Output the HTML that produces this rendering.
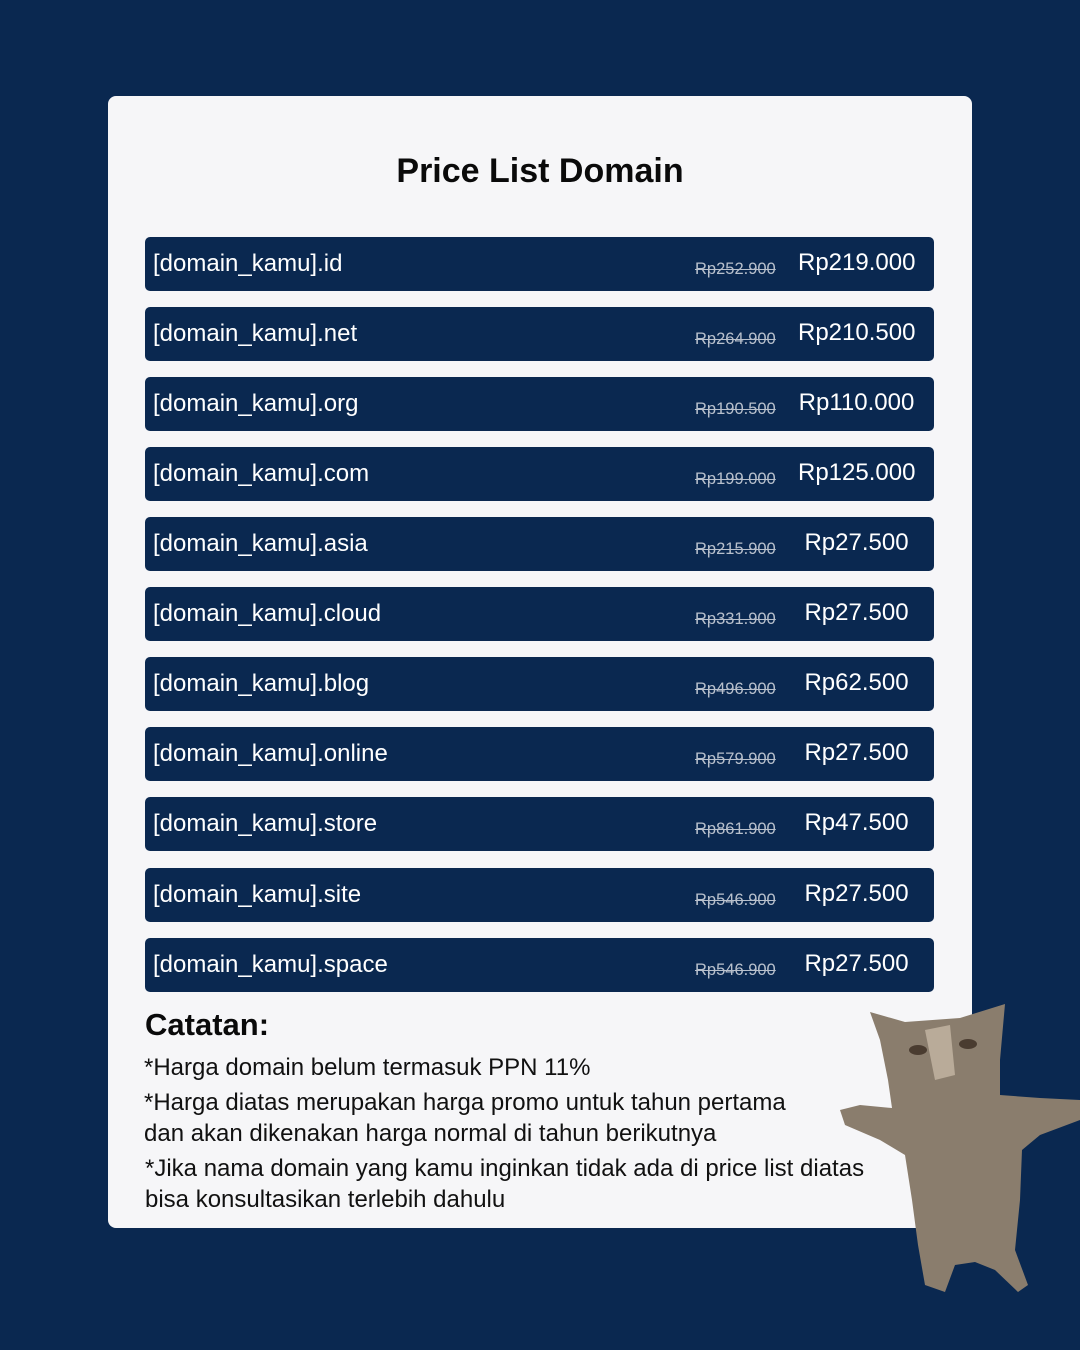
<!DOCTYPE html>
<html><head><meta charset="utf-8"><style>
body{margin:0;width:1080px;height:1350px;background:#0a2850;position:relative;overflow:hidden;font-family:"Liberation Sans",sans-serif}
.card{position:absolute;left:108px;top:96px;width:864px;height:1132px;background:#f6f6f8;border-radius:8px}
h1{position:absolute;left:108px;width:864px;top:152px;margin:0;text-align:center;font-size:34px;font-weight:bold;color:#0a0a0a}
.row{position:absolute;left:145px;width:789px;height:54px;background:#0a2850;border-radius:5px;color:#fff}
.d{position:absolute;left:8px;top:13px;font-size:24px}
.o{position:absolute;left:550px;top:23px;font-size:16.5px;color:#b8c0cc;text-decoration:line-through}
.p{position:absolute;left:653px;width:117px;text-align:center;top:12px;font-size:24px}
.c{position:absolute;left:145px;top:1007px;font-size:31px;font-weight:bold;color:#0a0a0a}
.n{position:absolute;font-size:24px;color:#111;line-height:31px}
</style></head><body>
<div class="card"></div>
<h1>Price List Domain</h1>
<div class="row" style="top:237px"><span class="d">[domain_kamu].id</span><span class="o">Rp252.900</span><span class="p">Rp219.000</span></div>
<div class="row" style="top:307px"><span class="d">[domain_kamu].net</span><span class="o">Rp264.900</span><span class="p">Rp210.500</span></div>
<div class="row" style="top:377px"><span class="d">[domain_kamu].org</span><span class="o">Rp190.500</span><span class="p">Rp110.000</span></div>
<div class="row" style="top:447px"><span class="d">[domain_kamu].com</span><span class="o">Rp199.000</span><span class="p">Rp125.000</span></div>
<div class="row" style="top:517px"><span class="d">[domain_kamu].asia</span><span class="o">Rp215.900</span><span class="p">Rp27.500</span></div>
<div class="row" style="top:587px"><span class="d">[domain_kamu].cloud</span><span class="o">Rp331.900</span><span class="p">Rp27.500</span></div>
<div class="row" style="top:657px"><span class="d">[domain_kamu].blog</span><span class="o">Rp496.900</span><span class="p">Rp62.500</span></div>
<div class="row" style="top:727px"><span class="d">[domain_kamu].online</span><span class="o">Rp579.900</span><span class="p">Rp27.500</span></div>
<div class="row" style="top:797px"><span class="d">[domain_kamu].store</span><span class="o">Rp861.900</span><span class="p">Rp47.500</span></div>
<div class="row" style="top:868px"><span class="d">[domain_kamu].site</span><span class="o">Rp546.900</span><span class="p">Rp27.500</span></div>
<div class="row" style="top:938px"><span class="d">[domain_kamu].space</span><span class="o">Rp546.900</span><span class="p">Rp27.500</span></div>
<div class="c">Catatan:</div>
<div class="n" style="left:144px;top:1052px">*Harga domain belum termasuk PPN 11%</div>
<div class="n" style="left:144px;top:1087px">*Harga diatas merupakan harga promo untuk tahun pertama<br>dan akan dikenakan harga normal di tahun berikutnya</div>
<div class="n" style="left:145px;top:1153px">*Jika nama domain yang kamu inginkan tidak ada di price list diatas<br>bisa konsultasikan terlebih dahulu</div>
<svg style="position:absolute;left:0;top:0" width="1080" height="1350">
<path fill="#8a7d6d" d="M870 1012 L905 1022 L960 1018 L1005 1004 L1000 1060 L1000 1095 L1040 1098 L1080 1100 L1080 1120 L1040 1135 L1022 1150 L1020 1200 L1015 1250 L1028 1285 L1018 1292 L995 1270 L975 1262 L955 1265 L945 1292 L925 1285 L918 1245 L912 1200 L905 1155 L880 1140 L845 1125 L840 1110 L860 1105 L892 1108 L888 1080 L880 1040 Z"/>
<path fill="#b9ab99" d="M925 1030 L950 1025 L955 1075 L935 1080 Z"/>
<ellipse cx="918" cy="1050" rx="9" ry="5" fill="#4a3c30"/><ellipse cx="968" cy="1044" rx="9" ry="5" fill="#4a3c30"/>
</svg>
</body></html>
